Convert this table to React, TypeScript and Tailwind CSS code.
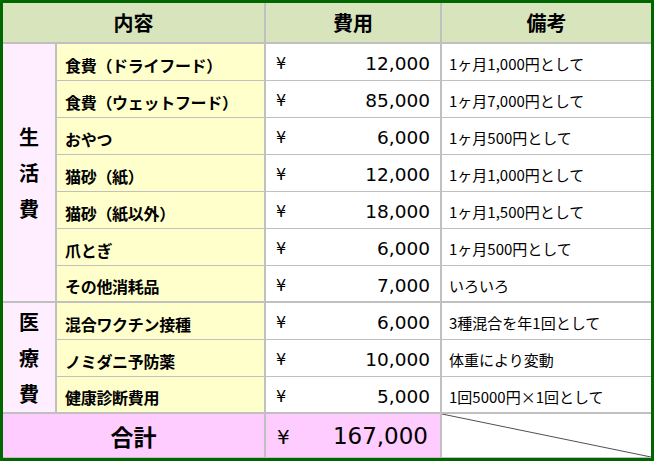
import React from "react";

const jp = { fontFamily: '"Noto Sans CJK JP", "Noto Sans", sans-serif' };
const num = { fontFamily: '"DejaVu Sans", "Noto Sans CJK JP", sans-serif' };

type Row = { item: string; cost: string; note: string };

const life: Row[] = [
  { item: "食費（ドライフード）", cost: "12,000", note: "1ヶ月1,000円として" },
  { item: "食費（ウェットフード）", cost: "85,000", note: "1ヶ月7,000円として" },
  { item: "おやつ", cost: "6,000", note: "1ヶ月500円として" },
  { item: "猫砂（紙）", cost: "12,000", note: "1ヶ月1,000円として" },
  { item: "猫砂（紙以外）", cost: "18,000", note: "1ヶ月1,500円として" },
  { item: "爪とぎ", cost: "6,000", note: "1ヶ月500円として" },
  { item: "その他消耗品", cost: "7,000", note: "いろいろ" },
];

const medical: Row[] = [
  { item: "混合ワクチン接種", cost: "6,000", note: "3種混合を年1回として" },
  { item: "ノミダニ予防薬", cost: "10,000", note: "体重により変動" },
  { item: "健康診断費用", cost: "5,000", note: "1回5000円×1回として" },
];

function Section({ label, rows }: { label: string[]; rows: Row[] }) {
  return (
    <div className="flex border-b-2 border-[#c0c0c0]">
      <div
        className="w-[54px] shrink-0 border-r-2 border-[#c0c0c0] bg-[#ffeeff] flex flex-col items-center justify-center gap-[15px] text-[20px] font-bold text-black leading-[21px]"
        style={jp}
      >
        {label.map((c) => (
          <span key={c}>{c}</span>
        ))}
      </div>
      <div className="flex flex-col flex-1">
        {rows.map((r, i) => {
          const last = i === rows.length - 1;
          return (
            <div
              key={r.item}
              className={
                last
                  ? "flex h-[35px]"
                  : "flex h-[37px] border-b border-[#c0c0c0]"
              }
            >
              <div
                className="w-[209px] shrink-0 border-r-2 border-[#c0c0c0] bg-[#ffffcc] flex items-center pl-[8px] pt-[5px] text-[16px] font-bold text-black tracking-[-0.3px]"
                style={jp}
              >
                {r.item}
              </div>
              <div
                className="w-[176px] shrink-0 border-r-2 border-[#c0c0c0] bg-white flex items-center justify-between pl-[10px] pr-[10px] pt-[4px] text-[18.5px] text-black"
                style={num}
              >
                <span className="text-[16px]">¥</span>
                <span>{r.cost}</span>
              </div>
              <div
                className="flex-1 bg-white flex items-center pl-[7px] pt-[5px] text-[15px] text-black"
                style={jp}
              >
                {r.note}
              </div>
            </div>
          );
        })}
      </div>
    </div>
  );
}

export default function App() {
  return (
    <div className="w-[654px] h-[461px] border-[3px] border-[#006600] bg-white flex flex-col overflow-hidden">
      <div
        className="flex h-[41px] shrink-0 border-b-2 border-[#c0c0c0] bg-[#d8e4bc] text-[20px] font-bold text-black"
        style={jp}
      >
        <div className="w-[263px] shrink-0 border-r-2 border-[#c0c0c0] flex items-center justify-center pt-[1px]">
          内容
        </div>
        <div className="w-[176px] shrink-0 border-r-2 border-[#c0c0c0] flex items-center justify-center pt-[1px]">
          費用
        </div>
        <div className="flex-1 flex items-center justify-center pt-[1px]">備考</div>
      </div>
      <Section label={["生", "活", "費"]} rows={life} />
      <Section label={["医", "療", "費"]} rows={medical} />
      <div className="flex h-[44px] shrink-0 border-b border-[#c0c0c0]">
        <div
          className="w-[263px] shrink-0 border-r-2 border-[#c0c0c0] bg-[#ffccff] flex items-center justify-center pt-[2px] text-[23px] font-bold text-black"
          style={jp}
        >
          合計
        </div>
        <div
          className="w-[176px] shrink-0 border-r-2 border-[#c0c0c0] bg-[#ffccff] flex items-center justify-between pl-[11px] pr-[12px] pt-[2px] text-[23px] text-black"
          style={num}
        >
          <span className="text-[20px]">¥</span>
          <span>167,000</span>
        </div>
        <div className="flex-1 bg-white relative">
          <svg className="absolute inset-0 w-full h-full" preserveAspectRatio="none" viewBox="0 0 100 100">
            <line x1="0" y1="0" x2="100" y2="100" stroke="#505050" strokeWidth="1" vectorEffect="non-scaling-stroke" />
          </svg>
        </div>
      </div>
    </div>
  );
}
